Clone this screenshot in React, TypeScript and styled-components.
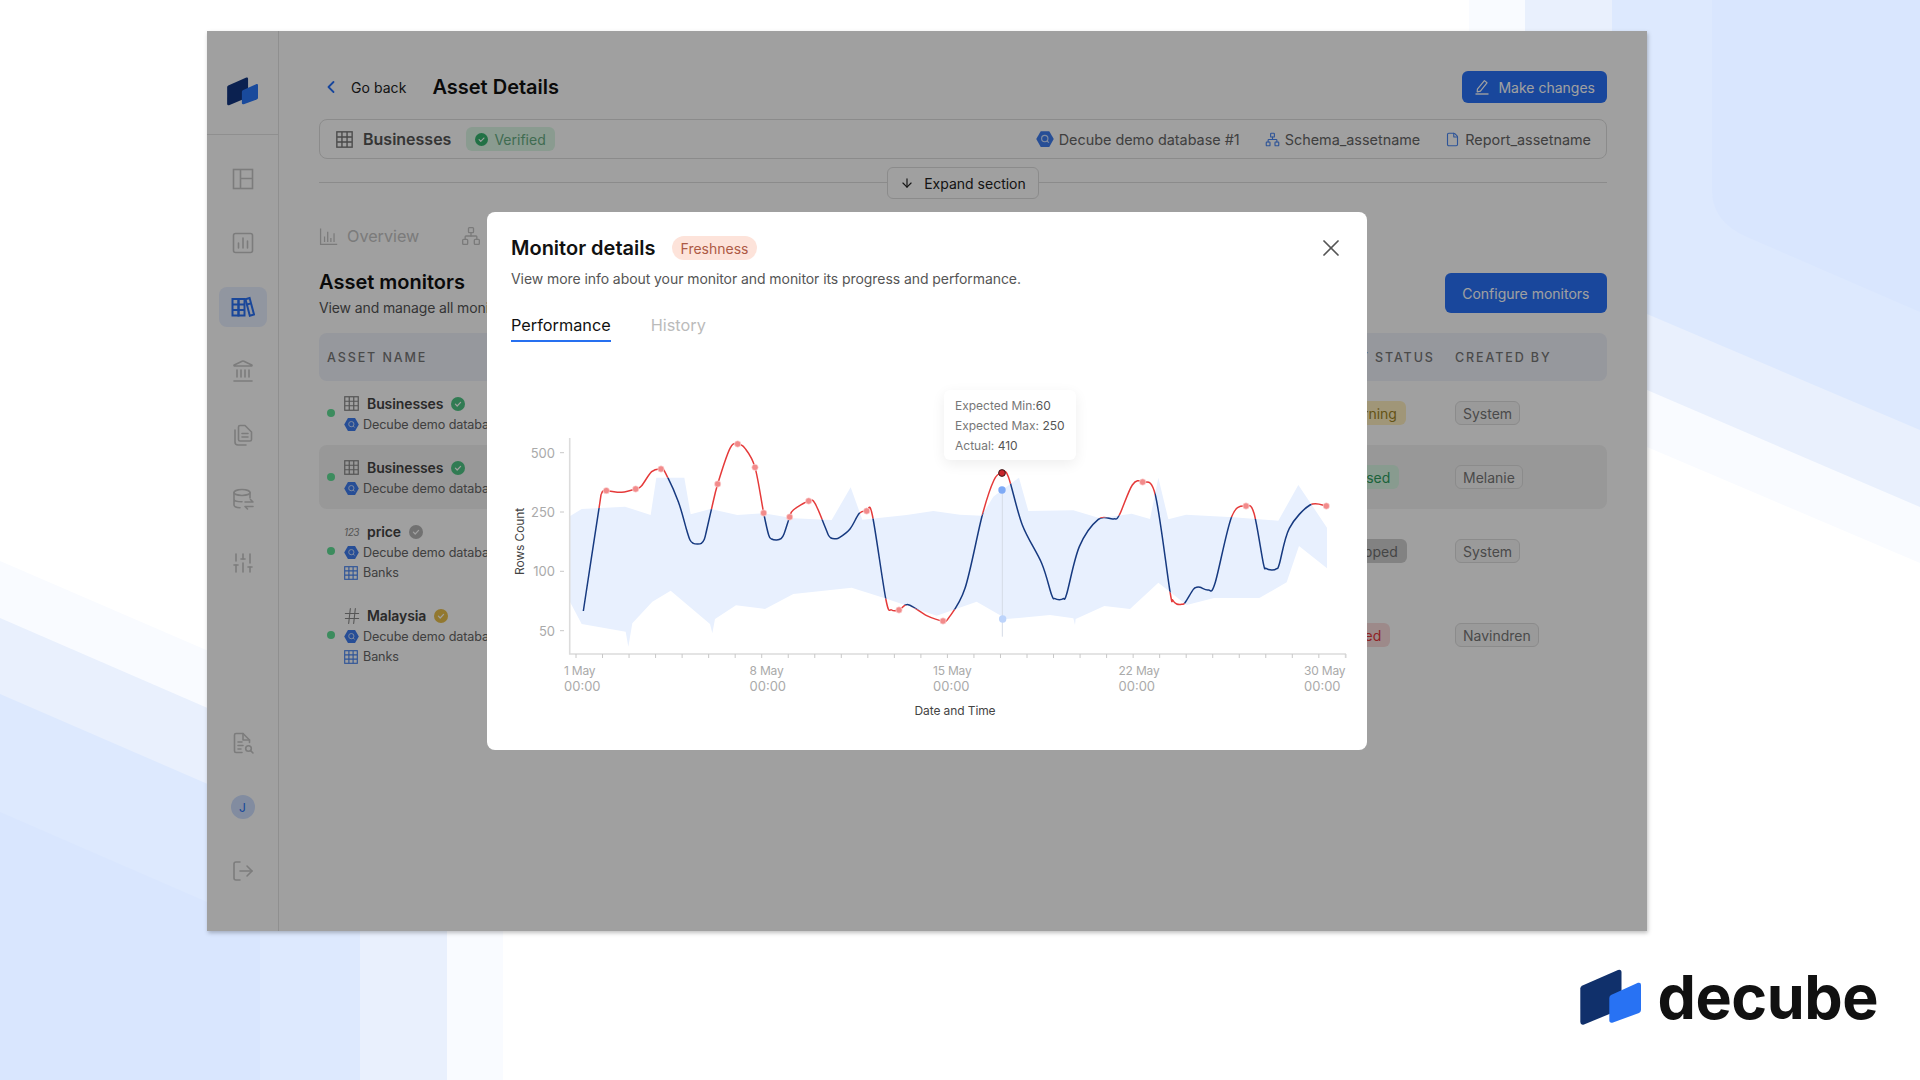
import React from "react";
import styled, { createGlobalStyle } from "styled-components";
import { ArrowDown, ChevronLeft, Hash, Landmark, LogOut, Network, SlidersVertical, File, X } from "lucide-react";

const FONT = `Inter, "Open Sans", "Liberation Sans", sans-serif`;

const GlobalStyle = createGlobalStyle`
  html, body {
    margin: 0;
    padding: 0;
    background: #fff;
    font-family: ${FONT};
  }
  * {
    box-sizing: border-box;
  }
`;

// chart points are read off a 3x crop of the plot, so x/3 and y/3 give the plot position
type Pt = [number, number];

const px = (x: number) => 500 + x / 3;
const py = (y: number) => 370 + y / 3;

const LINE: Pt[] = [
  [250, 723], [297, 415], [305, 370], [318, 362], [365, 367], [407, 357], [425, 347], [455, 305], [483, 297],
  [497, 310], [535, 395], [560, 480], [570, 510], [580, 520], [592, 522], [604, 520], [613, 508], [620, 480],
  [635, 415], [653, 342], [690, 235], [713, 222], [735, 235], [765, 292], [791, 429], [806, 495], [815, 507],
  [830, 510], [843, 506], [852, 492], [869, 441], [880, 420], [926, 393], [945, 400], [975, 470], [985, 495],
  [993, 504], [1005, 506], [1018, 503], [1050, 477], [1078, 430], [1100, 423], [1117, 435], [1158, 690],
  [1175, 720], [1197, 720], [1225, 704], [1280, 737], [1329, 753], [1345, 745], [1395, 655], [1447, 435],
  [1482, 330], [1506, 309], [1525, 320], [1567, 465], [1625, 580], [1655, 675], [1665, 686], [1678, 689],
  [1690, 686], [1700, 672], [1738, 530], [1795, 448], [1840, 447], [1858, 435], [1897, 345], [1928, 336],
  [1966, 375], [2010, 665], [2018, 690], [2030, 702], [2045, 703], [2055, 698], [2080, 658], [2090, 652],
  [2100, 652], [2125, 660], [2145, 640], [2195, 440], [2238, 408], [2262, 430], [2290, 580], [2298, 595],
  [2315, 600], [2330, 596], [2338, 582], [2368, 475], [2430, 405], [2479, 408],
];

const BAND: Pt[] = [
  [207, 440], [245, 417], [375, 410], [452, 435], [469, 323], [553, 323], [572, 433], [632, 417], [712, 435],
  [790, 430], [880, 445], [995, 450], [1052, 352], [1087, 449], [1220, 435], [1300, 423], [1380, 434],
  [1445, 437], [1480, 380], [1506, 360], [1557, 323], [1585, 423], [1720, 421], [1800, 445], [1895, 431],
  [1950, 447], [1975, 323], [2005, 448], [2058, 434], [2200, 442], [2335, 452], [2395, 345], [2481, 473],
  [2481, 595], [2397, 528], [2360, 637], [2278, 684], [2142, 684], [2060, 705], [1975, 638], [1890, 717],
  [1813, 708], [1727, 747], [1725, 765], [1720, 745], [1650, 735], [1520, 747], [1430, 695], [1310, 737],
  [1155, 685], [1055, 653], [880, 672], [795, 717], [708, 706], [645, 747], [637, 790], [630, 762], [512, 662],
  [457, 695], [397, 760], [385, 830], [377, 785], [245, 762], [207, 690],
];

const ANOMALIES: Pt[] = [
  [319, 362], [407, 357], [483, 297], [653, 342], [713, 222], [765, 292], [791, 429], [869, 441], [926, 393],
  [1100, 423], [1197, 720], [1329, 753], [1928, 336], [2238, 408], [2479, 408],
];

const X_LABELS = [
  { x: 564, day: "1 May" },
  { x: 749.5, day: "8 May" },
  { x: 933, day: "15 May" },
  { x: 1118.5, day: "22 May" },
  { x: 1304, day: "30 May" },
];

const Y_LABELS = [
  { y: 452.7, label: "500" },
  { y: 512, label: "250" },
  { y: 571.3, label: "100" },
  { y: 630.7, label: "50" },
];

const TICKS = Array.from({ length: 30 }, (_, i) => 576 + i * 26.53);

function smoothPath(points: Pt[]) {
  const p = points.map(([x, y]): Pt => [px(x), py(y)]);
  let d = `M${p[0][0]} ${p[0][1]}`;
  for (let i = 0; i < p.length - 1; i++) {
    const a = p[i - 1] || p[i];
    const b = p[i];
    const c = p[i + 1];
    const e = p[i + 2] || c;
    d += ` C${b[0] + (c[0] - a[0]) / 6} ${b[1] + (c[1] - a[1]) / 6} ${c[0] - (e[0] - b[0]) / 6} ${c[1] - (e[1] - b[1]) / 6} ${c[0]} ${c[1]}`;
  }
  return d;
}

const bandPoints = BAND.map(([x, y]) => `${px(x)},${py(y)}`).join(" ");
const bandOutline = `M${bandPoints.replace(/ /g, " L")}Z`;
const linePath = smoothPath(LINE);

function LogoMark({ width, dark, light }: { width: number; dark: string; light: string }) {
  return (
    <svg width={width} viewBox="0 0 61 56" height={(width * 56) / 61}>
      <path
        d="M2.5 16.5 L38 1 Q41.5 0 41.5 3.5 L41.5 40 L4 55.5 Q0.5 56.5 0.3 53 L0.3 19.5 Q0.3 17.5 2.5 16.5 Z"
        fill={dark}
      />
      <path
        d="M31 26 L58 13.8 Q61 13 61 16 L61 41 Q61 43 59 44 L33 53.5 Q29.3 54.5 29.3 51 L29.3 29 Q29.3 27 31 26 Z"
        fill={light}
      />
    </svg>
  );
}

function GridIcon({ size = 16 }: { size?: number }) {
  return (
    <svg width={size} height={size} viewBox="0 0 16 16" fill="none" stroke="currentColor" strokeWidth="1.3">
      <rect x="0.8" y="0.8" width="14.4" height="14.4" />
      <path d="M5.6 1V15M10.4 1V15M1 5.6H15M1 10.4H15" />
    </svg>
  );
}

function HexIcon({ size = 16 }: { size?: number }) {
  return (
    <svg width={size} height={size} viewBox="0 0 16 16">
      <path d="M4.2 1H11.8L15.8 8L11.8 15H4.2L0.2 8Z" fill="#3f7df0" />
      <circle cx="7.8" cy="7.6" r="2.8" fill="none" stroke="#cfe0ff" strokeWidth="1" />
      <path d="M9.8 9.6L11.4 11.2" stroke="#cfe0ff" strokeWidth="1" />
    </svg>
  );
}

function CheckBadge({ color, size = 14 }: { color: string; size?: number }) {
  return (
    <svg width={size} height={size} viewBox="0 0 14 14">
      <circle cx="7" cy="7" r="7" fill={color} />
      <path d="M4.4 7.2L6.2 9L9.6 5.4" fill="none" stroke="#fff" strokeWidth="1.2" strokeLinecap="round" strokeLinejoin="round" />
    </svg>
  );
}

const icon = {
  width: 24,
  height: 24,
  viewBox: "0 0 24 24",
  fill: "none",
  stroke: "currentColor",
  strokeWidth: 1.6,
  strokeLinecap: "round" as const,
  strokeLinejoin: "round" as const,
};

function PanelIcon() {
  return (
    <svg {...icon} strokeLinecap="butt" strokeLinejoin="miter">
      <rect x="2.5" y="2.5" width="19" height="19" />
      <path d="M9.5 2.5V21.5M9.5 11.5H21.5" />
    </svg>
  );
}

function ChartBoxIcon() {
  return (
    <svg {...icon}>
      <rect x="2.5" y="2.5" width="19" height="19" rx="2" />
      <path d="M7.5 17V12M12 17V7M16.5 17V10" />
    </svg>
  );
}

function BooksIcon() {
  return (
    <svg {...icon} strokeWidth={2} strokeLinecap="butt" strokeLinejoin="miter">
      <rect x="1.5" y="4" width="6" height="16.5" />
      <rect x="7.5" y="4" width="6" height="16.5" />
      <path d="M1.5 9.5H13.5M1.5 15H13.5" />
      <path d="M14.5 4.2L18.6 3L23 19.5L18.8 20.8Z" />
      <path d="M16 9.5L20 8.4" />
    </svg>
  );
}

function FilesIcon() {
  return (
    <svg {...icon}>
      <path d="M9 2.5H14L20.5 9V16.5A1.5 1.5 0 0 1 19 18H9A1.5 1.5 0 0 1 7.5 16.5V4A1.5 1.5 0 0 1 9 2.5Z" />
      <path d="M11 10.5H17M11 14H17" />
      <path d="M4 7V19A3 3 0 0 0 7 22H15" />
    </svg>
  );
}

function DatabaseSwapIcon() {
  return (
    <svg {...icon}>
      <ellipse cx="11" cy="5.5" rx="8" ry="3" />
      <path d="M3 5.5V18C3 19.5 5.5 20.5 9 20.8M19 5.5V11M3 12C3 13.6 6.5 14.8 11 14.8" />
      <path d="M14 15H22L19.5 12.5M22 19.5H14L16.5 22" />
    </svg>
  );
}

function FileSearchIcon() {
  return (
    <svg {...icon}>
      <path d="M11 21.5H5A1.5 1.5 0 0 1 3.5 20V4A1.5 1.5 0 0 1 5 2.5H12L18.5 9V11.5" />
      <path d="M12 2.5V9H18.5M7 11H11M7 14.5H12M7 18H10" />
      <circle cx="17.5" cy="17.5" r="2.8" />
      <path d="M19.6 19.6L22 22" />
    </svg>
  );
}

function BarsAxisIcon() {
  return (
    <svg {...icon} width={19} height={19} strokeLinecap="butt">
      <path d="M2 2V22H23M7 19V12M11 19V6M15 19V14M19 19V8" />
    </svg>
  );
}

function PenLineIcon() {
  return (
    <svg width={16} height={16} viewBox="0 0 16 16" fill="none" stroke="currentColor" strokeWidth="1.2" strokeLinejoin="round">
      <path d="M3.4 10.2L10.4 1.6L13 3.8L6.4 12.2L3.2 12.9Z" />
      <path d="M1.5 15H14.5" strokeWidth="1.4" />
    </svg>
  );
}

const NAV_TOP = [
  { key: "panel", node: <PanelIcon /> },
  { key: "chart", node: <ChartBoxIcon /> },
  { key: "books", node: <BooksIcon />, active: true },
  { key: "bank", node: <Landmark size={24} strokeWidth={1.6} /> },
  { key: "files", node: <FilesIcon /> },
  { key: "db", node: <DatabaseSwapIcon /> },
  { key: "sliders", node: <SlidersVertical size={24} strokeWidth={1.6} /> },
];

const STATUS_COLORS = {
  warning: { bg: "#fff0bf", fg: "#a08425" },
  passed: { bg: "#d9f7e4", fg: "#2f9e5f" },
  stopped: { bg: "#cfcfcf", fg: "#6f6f6f" },
  failed: { bg: "#fbdcdc", fg: "#e5383b" },
};

type RowData = {
  kind: "grid" | "num" | "hash";
  name: string;
  check: string;
  banks?: boolean;
  status: keyof typeof STATUS_COLORS;
  statusLabel: string;
  owner: string;
  highlighted?: boolean;
};

const ROWS: RowData[] = [
  { kind: "grid", name: "Businesses", check: "#4fc584", status: "warning", statusLabel: "Warning", owner: "System" },
  { kind: "grid", name: "Businesses", check: "#4fc584", status: "passed", statusLabel: "Passed", owner: "Melanie", highlighted: true },
  { kind: "num", name: "price", check: "#b5b5b5", banks: true, status: "stopped", statusLabel: "Stopped", owner: "System" },
  { kind: "hash", name: "Malaysia", check: "#e9c04c", banks: true, status: "failed", statusLabel: "Failed", owner: "Navindren" },
];

function App() {
  return (
    <Page>
      <GlobalStyle />
      <Backdrop viewBox="0 0 1920 1080" width="1920" height="1080">
        <polygon points="1469,0 1920,0 1920,563 1647,447 1469,370" fill="#f9fbff" />
        <polygon points="1525,0 1920,0 1920,507 1647,390 1525,340" fill="#e9f0fd" />
        <polygon points="1612,0 1920,0 1920,430 1647,314 1612,300" fill="#dde9fe" />
        <path d="M1712 0H1920V312L1747 237Q1712 222 1712 190Z" fill="#d9e6fe" />
        <polygon points="0,561 503,778 503,1080 0,1080" fill="#f9fbff" />
        <polygon points="0,618 447,812 447,1080 0,1080" fill="#e9f0fd" />
        <polygon points="0,694 360,850 360,1080 0,1080" fill="#dde9fe" />
        <polygon points="0,812 260,925 260,1080 0,1080" fill="#d9e6fe" />
      </Backdrop>

      <Window>
        <Sidebar>
          <LogoCell>
            <LogoMark width={31} dark="#133680" light="#2976f9" />
          </LogoCell>
          <NavList>
            {NAV_TOP.map((item) => (
              <NavItem key={item.key} $active={item.active}>
                {item.node}
              </NavItem>
            ))}
            <NavBottom>
              <NavItem>
                <FileSearchIcon />
              </NavItem>
              <NavItem>
                <Avatar>J</Avatar>
              </NavItem>
              <NavItem>
                <LogOut size={24} strokeWidth={1.6} />
              </NavItem>
            </NavBottom>
          </NavList>
        </Sidebar>

        <Main>
          <TopRow>
            <BackLink>
              <ChevronLeft size={20} color="#2670f9" strokeWidth={2.2} />
              Go back
            </BackLink>
            <PageTitle>Asset Details</PageTitle>
            <PrimaryButton $height={32} $pad={12}>
              <PenLineIcon />
              Make changes
            </PrimaryButton>
          </TopRow>

          <InfoBar>
            <InfoName>
              <GridIcon size={17} />
              Businesses
            </InfoName>
            <VerifiedPill>
              <CheckBadge color="#35b56f" size={13} />
              Verified
            </VerifiedPill>
            <InfoLinks>
              <InfoLink>
                <HexIcon size={18} />
                Decube demo database #1
              </InfoLink>
              <InfoLink>
                <Network size={15} color="#4a86f2" strokeWidth={1.8} />
                Schema_assetname
              </InfoLink>
              <InfoLink>
                <File size={15} color="#4a86f2" strokeWidth={1.8} />
                Report_assetname
              </InfoLink>
            </InfoLinks>
          </InfoBar>

          <ExpandRow>
            <Rule />
            <ExpandButton>
              <ArrowDown size={14} strokeWidth={2} />
              Expand section
            </ExpandButton>
            <Rule />
          </ExpandRow>

          <PageTabs>
            <PageTab>
              <BarsAxisIcon />
              Overview
            </PageTab>
            <PageTab>
              <Network size={20} strokeWidth={1.6} />
            </PageTab>
          </PageTabs>

          <SectionHead>
            <div>
              <SectionTitle>Asset monitors</SectionTitle>
              <SectionSub>View and manage all monitors configured for this asset.</SectionSub>
            </div>
            <PrimaryButton $height={40} $pad={17.5}>
              Configure monitors
            </PrimaryButton>
          </SectionHead>

          <TableHead>
            <span>ASSET NAME</span>
            <span>LAST STATUS</span>
            <span>CREATED BY</span>
          </TableHead>

          {ROWS.map((row, i) => (
            <TableRow key={i} $highlighted={row.highlighted} $tall={row.banks}>
              <NameCell>
                <StateDot />
                <NameLines>
                  <NameLine>
                    <KindIcon>
                      {row.kind === "grid" && <GridIcon size={15} />}
                      {row.kind === "num" && <NumTag>123</NumTag>}
                      {row.kind === "hash" && <HashIcon size={20} strokeWidth={1.3} />}
                    </KindIcon>
                    {row.name}
                    <CheckBadge color={row.check} />
                  </NameLine>
                  <SubLine>
                    <HexIcon size={15} />
                    Decube demo database #1
                  </SubLine>
                  {row.banks && (
                    <SubLine>
                      <BlueGrid>
                        <GridIcon size={14} />
                      </BlueGrid>
                      Banks
                    </SubLine>
                  )}
                </NameLines>
              </NameCell>
              <div>
                <StatusPill $bg={STATUS_COLORS[row.status].bg} $fg={STATUS_COLORS[row.status].fg}>
                  {row.statusLabel}
                </StatusPill>
              </div>
              <div>
                <OwnerPill>{row.owner}</OwnerPill>
              </div>
            </TableRow>
          ))}
        </Main>

        <Scrim />

        <Modal>
          <ModalHead>
            <ModalTitle>Monitor details</ModalTitle>
            <FreshnessPill>Freshness</FreshnessPill>
            <CloseButton>
              <X size={28} strokeWidth={1.5} />
            </CloseButton>
          </ModalHead>
          <ModalDesc>View more info about your monitor and monitor its progress and performance.</ModalDesc>

          <ModalTabs>
            <ModalTab $active>Performance</ModalTab>
            <ModalTab>History</ModalTab>
          </ModalTabs>

          <ChartArea>
            <svg viewBox="511 350 856 376" width="856" height="376">
              <defs>
                <clipPath id="inside-band">
                  <polygon points={bandPoints} />
                </clipPath>
                <clipPath id="outside-band">
                  <path d={`M500 340H1400V760H500Z ${bandOutline}`} clipRule="evenodd" />
                </clipPath>
              </defs>
              <polygon points={bandPoints} fill="#e8f0fe" />

              <path d="M569.7 438V654H1346" fill="none" stroke="#dcdcdc" strokeWidth="1.6" />
              {TICKS.map((x) => (
                <line key={x} x1={x} x2={x} y1="654" y2="658" stroke="#c8c8c8" strokeWidth="1" />
              ))}
              <line x1="1346" x2="1346" y1="654" y2="658" stroke="#dcdcdc" strokeWidth="1.2" />

              {Y_LABELS.map((t) => (
                <g key={t.label}>
                  <AxisText x="555" y={t.y + 5} textAnchor="end">
                    {t.label}
                  </AxisText>
                  <line x1="560" x2="564" y1={t.y} y2={t.y} stroke="#c8c8c8" strokeWidth="1" />
                </g>
              ))}
              {X_LABELS.map((t) => (
                <g key={t.day}>
                  <DayText x={t.x} y="675">
                    {t.day}
                  </DayText>
                  <AxisText x={t.x} y="691">
                    00:00
                  </AxisText>
                </g>
              ))}
              <AxisTitle x="914.5" y="715">
                Date and Time
              </AxisTitle>
              <AxisTitle x="0" y="0" textAnchor="middle" transform="translate(524 541.5) rotate(-90)">
                Rows Count
              </AxisTitle>

              <path d={linePath} fill="none" stroke="#e53a3a" strokeWidth="1.5" clipPath="url(#outside-band)" />
              <path d={linePath} fill="none" stroke="#173a80" strokeWidth="1.5" clipPath="url(#inside-band)" />

              <line x1={px(1507)} x2={px(1507)} y1={py(360)} y2={py(800)} stroke="#d5dbe6" strokeWidth="1" />
              {ANOMALIES.map(([x, y]) => (
                <circle key={x} cx={px(x)} cy={py(y)} r="3.2" fill="#f28b8b" stroke="#fde6e6" strokeWidth="0.6" />
              ))}
              <circle cx={px(1506)} cy={py(360)} r="3.7" fill="#7eaaf6" />
              <circle cx={px(1508)} cy={py(747)} r="3.7" fill="#bdd4fb" />
              <circle cx={px(1506)} cy={py(309)} r="3.4" fill="#c9272d" stroke="#2a1414" strokeWidth="0.9" />
            </svg>
            <Tooltip>
              <TooltipLine>
                Expected Min:<b>60</b>
              </TooltipLine>
              <TooltipLine>
                Expected Max: <b>250</b>
              </TooltipLine>
              <TooltipLine>
                Actual: <b>410</b>
              </TooltipLine>
            </Tooltip>
          </ChartArea>
        </Modal>
      </Window>

      <Brand>
        <LogoMark width={61} dark="#10306b" light="#2872f3" />
        <BrandName>decube</BrandName>
      </Brand>
    </Page>
  );
}

export default App;

const Page = styled.div`
  position: relative;
  width: 1920px;
  height: 1080px;
  overflow: hidden;
  padding: 31px 0 0 207px;
  display: flex;
  flex-direction: column;
  color: #111;
`;

const Backdrop = styled.svg`
  position: absolute;
  top: 0;
  left: 0;
`;

const Window = styled.div`
  position: relative;
  width: 1440px;
  height: 900px;
  flex: none;
  display: flex;
  background: #fff;
  box-shadow: 1px 2px 4px rgba(0, 0, 0, 0.25);
`;

const Scrim = styled.div`
  position: absolute;
  inset: 0;
  background: rgba(0, 0, 0, 0.373);
`;

const Sidebar = styled.aside`
  width: 72px;
  flex: none;
  display: flex;
  flex-direction: column;
  border-right: 1px solid #e4e4e4;
`;

const LogoCell = styled.div`
  height: 104px;
  flex: none;
  display: flex;
  align-items: center;
  justify-content: center;
  padding-top: 18px;
  border-bottom: 1px solid #e4e4e4;
`;

const NavList = styled.nav`
  flex: 1;
  display: flex;
  flex-direction: column;
  align-items: center;
  gap: 24px;
  padding: 24px 0 40px;
`;

const NavBottom = styled.div`
  margin-top: auto;
  display: flex;
  flex-direction: column;
  gap: 24px;
`;

const NavItem = styled.div<{ $active?: boolean }>`
  width: 48px;
  height: 40px;
  display: flex;
  align-items: center;
  justify-content: center;
  border-radius: 8px;
  color: ${(p) => (p.$active ? "#2a72f5" : "#c6c6c6")};
  background: ${(p) => (p.$active ? "#e8efff" : "transparent")};
`;

const Avatar = styled.div`
  width: 24px;
  height: 24px;
  border-radius: 50%;
  display: flex;
  align-items: center;
  justify-content: center;
  background: #cfe0ff;
  color: #2a72f5;
  font-size: 12px;
`;

const Main = styled.main`
  flex: 1;
  min-width: 0;
  padding: 40px 40px 0;
  display: flex;
  flex-direction: column;
`;

const TopRow = styled.div`
  height: 32px;
  display: flex;
  align-items: center;
`;

const BackLink = styled.div`
  display: flex;
  align-items: center;
  gap: 10px;
  margin-left: 2px;
  font-size: 14px;
  letter-spacing: 0.05px;
  color: #222;
`;

const PageTitle = styled.h1`
  margin: 0 auto 0 26px;
  font-size: 20px;
  font-weight: 600;
  color: #111;
`;

const PrimaryButton = styled.button<{ $height: number; $pad: number }>`
  height: ${(p) => p.$height}px;
  padding: 0 ${(p) => p.$pad}px;
  display: flex;
  align-items: center;
  gap: 8px;
  border: none;
  border-radius: 6px;
  background: #2872f9;
  color: #fff;
  font-family: ${FONT};
  font-size: 14px;
`;

const InfoBar = styled.div`
  height: 40px;
  margin-top: 16px;
  padding: 0 15px 0 16px;
  display: flex;
  align-items: center;
  border: 1px solid #dedede;
  border-radius: 8px;
`;

const InfoName = styled.div`
  display: flex;
  align-items: center;
  gap: 10px;
  font-size: 16px;
  font-weight: 600;
  color: #555;

  svg {
    color: #777;
  }
`;

const VerifiedPill = styled.div`
  height: 24px;
  margin-left: 15px;
  padding: 0 9px;
  display: flex;
  align-items: center;
  gap: 6px;
  border-radius: 6px;
  background: #dcf8e6;
  color: #66ac82;
  font-size: 14px;
`;

const InfoLinks = styled.div`
  margin-left: auto;
  display: flex;
  align-items: center;
  gap: 25px;
`;

const InfoLink = styled.div`
  display: flex;
  align-items: center;
  gap: 5px;
  font-size: 14.4px;
  color: #666;
`;

const ExpandRow = styled.div`
  height: 32px;
  margin-top: 8px;
  display: flex;
  align-items: center;
`;

const Rule = styled.div`
  flex: 1;
  height: 1px;
  margin-bottom: 2px;
  background: #dedede;
`;

const ExpandButton = styled.div`
  width: 152px;
  height: 32px;
  display: flex;
  align-items: center;
  justify-content: center;
  gap: 10px;
  border: 1px solid #dedede;
  border-radius: 6px;
  font-size: 14px;
  color: #222;
`;

const PageTabs = styled.div`
  height: 24px;
  margin-top: 25px;
  display: flex;
  gap: 42px;
`;

const PageTab = styled.div`
  display: flex;
  align-items: center;
  gap: 9px;
  font-size: 16.2px;
  color: #c4c4c4;
`;

const SectionHead = styled.div`
  height: 40px;
  margin-top: 25px;
  display: flex;
  align-items: flex-start;
  justify-content: space-between;
`;

const SectionTitle = styled.h2`
  margin: 0;
  font-size: 20px;
  line-height: 18px;
  font-weight: 600;
  color: #111;
`;

const SectionSub = styled.p`
  margin: 8px 0 0;
  font-size: 14px;
  line-height: 18px;
  letter-spacing: -0.12px;
  color: #555;
`;

const TableHead = styled.div`
  height: 48px;
  margin-top: 20px;
  padding-left: 8px;
  display: grid;
  grid-template-columns: 1003px 125px 1fr;
  align-items: center;
  border-radius: 8px;
  background: #eff2fb;
  font-size: 12.5px;
  font-weight: 500;
  letter-spacing: 1.9px;
  color: #777;
`;

const TableRow = styled.div<{ $highlighted?: boolean; $tall?: boolean }>`
  height: ${(p) => (p.$tall ? 84 : 64)}px;
  padding-left: 8px;
  display: grid;
  grid-template-columns: 1003px 125px 1fr;
  align-items: center;
  border-radius: 8px;
  background: ${(p) => (p.$highlighted ? "#f2f2f2" : "transparent")};
`;

const NameCell = styled.div`
  display: flex;
  align-items: center;
  gap: 9px;
`;

const StateDot = styled.span`
  width: 8px;
  height: 8px;
  flex: none;
  border-radius: 50%;
  background: #60df97;
`;

const NameLines = styled.div`
  display: flex;
  flex-direction: column;
  padding-top: 2px;
`;

const NameLine = styled.div`
  height: 21px;
  display: flex;
  align-items: center;
  gap: 8px;
  font-size: 14px;
  font-weight: 600;
  letter-spacing: -0.1px;
  color: #444;
`;

const KindIcon = styled.span`
  width: 15px;
  flex: none;
  display: flex;
  justify-content: flex-start;
  color: #888;
`;

const HashIcon = styled(Hash)`
  flex: none;
  margin-left: -2px;
`;

const NumTag = styled.span`
  font-size: 10px;
  font-style: italic;
  font-weight: 400;
  letter-spacing: -0.4px;
`;

const SubLine = styled.div`
  height: 20.5px;
  display: flex;
  align-items: center;
  gap: 4px;
  font-size: 12.6px;
  letter-spacing: -0.1px;
  color: #666;
  white-space: nowrap;
`;

const BlueGrid = styled.span`
  width: 15px;
  display: flex;
  color: #4a86f2;
`;

const StatusPill = styled.span<{ $bg: string; $fg: string }>`
  display: inline-flex;
  align-items: center;
  height: 24px;
  margin-left: 3px;
  padding: 0 9px;
  border-radius: 6px;
  background: ${(p) => p.$bg};
  color: ${(p) => p.$fg};
  font-size: 14px;
`;

const OwnerPill = styled.span`
  display: inline-flex;
  align-items: center;
  height: 24px;
  padding: 0 7px;
  border: 1px solid #dedede;
  border-radius: 6px;
  background: #f6f6f6;
  color: #777;
  font-size: 14px;
`;

const Modal = styled.div`
  position: absolute;
  left: 280px;
  top: 181px;
  width: 880px;
  height: 538px;
  padding: 24px;
  border-radius: 8px;
  background: #fff;
`;

const ModalHead = styled.div`
  height: 24px;
  display: flex;
  align-items: center;
  gap: 16px;
`;

const ModalTitle = styled.h3`
  margin: 0;
  font-size: 20px;
  font-weight: 600;
  color: #111;
`;

const FreshnessPill = styled.span`
  height: 24px;
  padding: 0 9px;
  display: flex;
  align-items: center;
  border-radius: 12px;
  background: #fde3da;
  color: #ad5a45;
  font-size: 14px;
`;

const CloseButton = styled.div`
  margin-left: auto;
  margin-right: -2px;
  display: flex;
  color: #555;
`;

const ModalDesc = styled.p`
  margin: 9px 0 0;
  font-size: 14px;
  line-height: 20px;
  letter-spacing: -0.07px;
  color: #555;
`;

const ModalTabs = styled.div`
  margin-top: 24px;
  display: flex;
  gap: 40px;
`;

const ModalTab = styled.div<{ $active?: boolean }>`
  height: 29px;
  line-height: 24px;
  font-size: 16.3px;
  color: ${(p) => (p.$active ? "#111" : "#bbb")};
  border-bottom: 2px solid ${(p) => (p.$active ? "#2670f0" : "transparent")};
`;

const ChartArea = styled.div`
  position: relative;
  width: 856px;
  margin-top: 8px;
`;

const AxisText = styled.text`
  font-family: ${FONT};
  font-size: 13px;
  fill: #aaa;
`;

const DayText = styled.text`
  font-family: ${FONT};
  font-size: 12px;
  letter-spacing: -0.2px;
  fill: #aaa;
`;

const AxisTitle = styled.text`
  font-family: ${FONT};
  font-size: 12px;
  letter-spacing: -0.1px;
  fill: #444;
`;

const Tooltip = styled.div`
  position: absolute;
  left: 433px;
  top: 40px;
  width: 132px;
  height: 70px;
  padding: 6px 11px;
  border-radius: 6px;
  background: #fff;
  box-shadow: 0 4px 14px rgba(0, 0, 0, 0.07);
`;

const TooltipLine = styled.div`
  height: 20px;
  line-height: 20px;
  font-size: 12px;
  color: #777;
  white-space: nowrap;

  b {
    font-weight: 400;
    color: #555;
  }
`;

const Brand = styled.div`
  position: relative;
  align-self: flex-end;
  margin-top: 38px;
  padding-right: 42px;
  display: flex;
  align-items: center;
  gap: 17px;
`;

const BrandName = styled.span`
  font-size: 61px;
  line-height: 56px;
  font-weight: 700;
  color: #111;
  letter-spacing: -0.5px;
`;
